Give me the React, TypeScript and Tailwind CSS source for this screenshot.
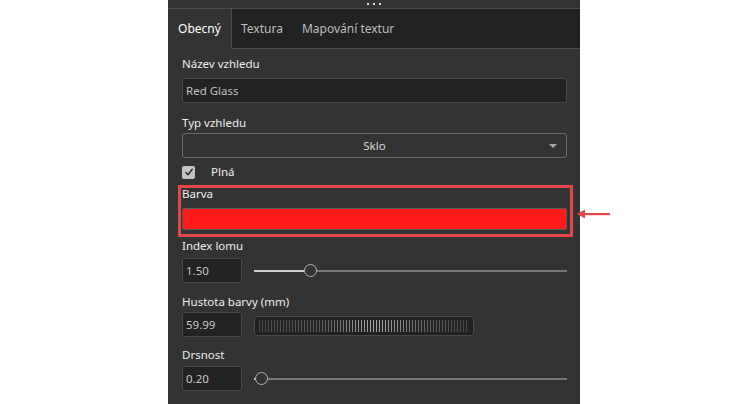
import React from "react";

const font = "font-['Noto_Sans',sans-serif]";

const Label = ({ children, className = "" }: { children: React.ReactNode; className?: string }) => (
	<div className={`h-4 leading-4 text-[11.5px] text-[#eeeeee] ${className}`}>{children}</div>
);

const NumBox = ({ value }: { value: string }) => (
	<div className="w-[60px] h-[25px] shrink-0 bg-[#222222] border border-[#474747] rounded-[2px] flex items-center pl-[3px] text-[11.5px] text-[#c8c8c8]">
		{value}
	</div>
);

const Slider = ({ pos }: { pos: number }) => (
	<div className="relative flex-1 h-[14px] ml-[12px] flex items-center">
		<div className="absolute left-0 right-0 h-[2px] bg-[#787878]" />
		<div className="absolute left-0 h-[2px] bg-[#cfcfcf]" style={{ width: pos }} />
		<div
			className="absolute w-[13px] h-[13px] rounded-full border-[1.5px] border-[#b4b4b4] bg-[#333333]"
			style={{ left: pos - 6 }}
		/>
	</div>
);

const App = () => {
	return (
		<div className={`w-[750px] h-[404px] bg-white overflow-hidden ${font}`}>
			<div className="ml-[168px] w-[412px] h-full bg-[#333333] flex flex-col">
				<div className="h-[8px] flex items-center justify-center gap-[4px]">
					<span className="w-[2px] h-[2px] bg-[#e0e0e0]" />
					<span className="w-[2px] h-[2px] bg-[#e0e0e0]" />
					<span className="w-[2px] h-[2px] bg-[#e0e0e0]" />
				</div>
				<div className="flex h-[41px] border-t border-[#4d4d4d]">
					<div className="w-[63px] flex items-center justify-center text-[12px] text-white">Obecný</div>
					<div className="flex-1 flex items-center bg-[#212121] border-l border-b border-[#4d4d4d] pl-[9px] text-[12px] text-[#bdbdbd]">
						<span>Textura</span>
						<span className="ml-[19px]">Mapování textur</span>
					</div>
				</div>

				<div className="flex flex-col pl-[14px] pr-[13px]">
					<Label className="mt-[7px]">Název vzhledu</Label>
					<div className="mt-[6px] h-[25px] bg-[#222222] border border-[#474747] rounded-[2px] flex items-center pl-[3px] text-[11.5px] text-[#c0c0c0]">
						Red Glass
					</div>

					<Label className="mt-[12px]">Typ vzhledu</Label>
					<div className="mt-[2px] h-[25px] relative border border-[#6a6a6a] rounded-[3px] flex items-center justify-center text-[11.5px] text-[#d8d8d8]">
						Sklo
						<span className="absolute right-[9px] top-[10px] w-0 h-0 border-l-[4px] border-r-[4px] border-t-[4px] border-l-transparent border-r-transparent border-t-[#a8a8a8]" />
					</div>

					<div className="mt-[6px] h-4 flex items-center">
						<div className="w-[13px] h-[13px] rounded-[2px] bg-[#c2c2c2] flex items-center justify-center">
							<svg width="10" height="10" viewBox="0 0 10 10">
								<path d="M1.5 5.2 L4 7.8 L8.6 1.8" fill="none" stroke="#262626" strokeWidth="1.4" />
							</svg>
						</div>
						<span className="ml-[16px] text-[11.5px] text-[#eeeeee]">Plná</span>
					</div>

					<div className="relative mt-[6px]">
						<Label>Barva</Label>
						<div className="mt-[6px] h-[22px] bg-[#ff1a1a] border border-[#5a5a5a] rounded-[2px]" />
						<div className="absolute left-[-4px] right-[-6px] top-[-1px] bottom-[-7px] border-[3px] border-[#e24646]" />
						<svg className="absolute left-[calc(100%+10px)] top-[23px]" width="34" height="10" viewBox="0 0 34 10">
							<path d="M0 5 L8 0.5 L8 9.5 Z" fill="#e24646" />
							<rect x="7" y="4" width="26" height="2.2" fill="#e24646" />
						</svg>
					</div>

					<Label className="mt-[8px]">Index lomu</Label>
					<div className="mt-[4px] flex items-center">
						<NumBox value="1.50" />
						<Slider pos={56} />
					</div>

					<Label className="mt-[11px]">Hustota barvy (mm)</Label>
					<div className="mt-[2px] flex items-center">
						<NumBox value="59.99" />
						<div className="ml-[12px] mt-[2px] w-[220px] h-[20px] bg-[#202020] border border-[#4a4a4a] rounded-[3px] p-[3px] px-[4px]">
							<div className="h-full [background-image:repeating-linear-gradient(90deg,transparent_0_1px,#242424_1px_3px),linear-gradient(90deg,#464646_0%,#5e5e5e_30%,#a8a8a8_55%,#626262_80%,#444444_100%)]" />
						</div>
					</div>

					<Label className="mt-[10px]">Drsnost</Label>
					<div className="mt-[3px] flex items-center">
						<NumBox value="0.20" />
						<Slider pos={7} />
					</div>
				</div>
			</div>
		</div>
	);
};

export default App;
